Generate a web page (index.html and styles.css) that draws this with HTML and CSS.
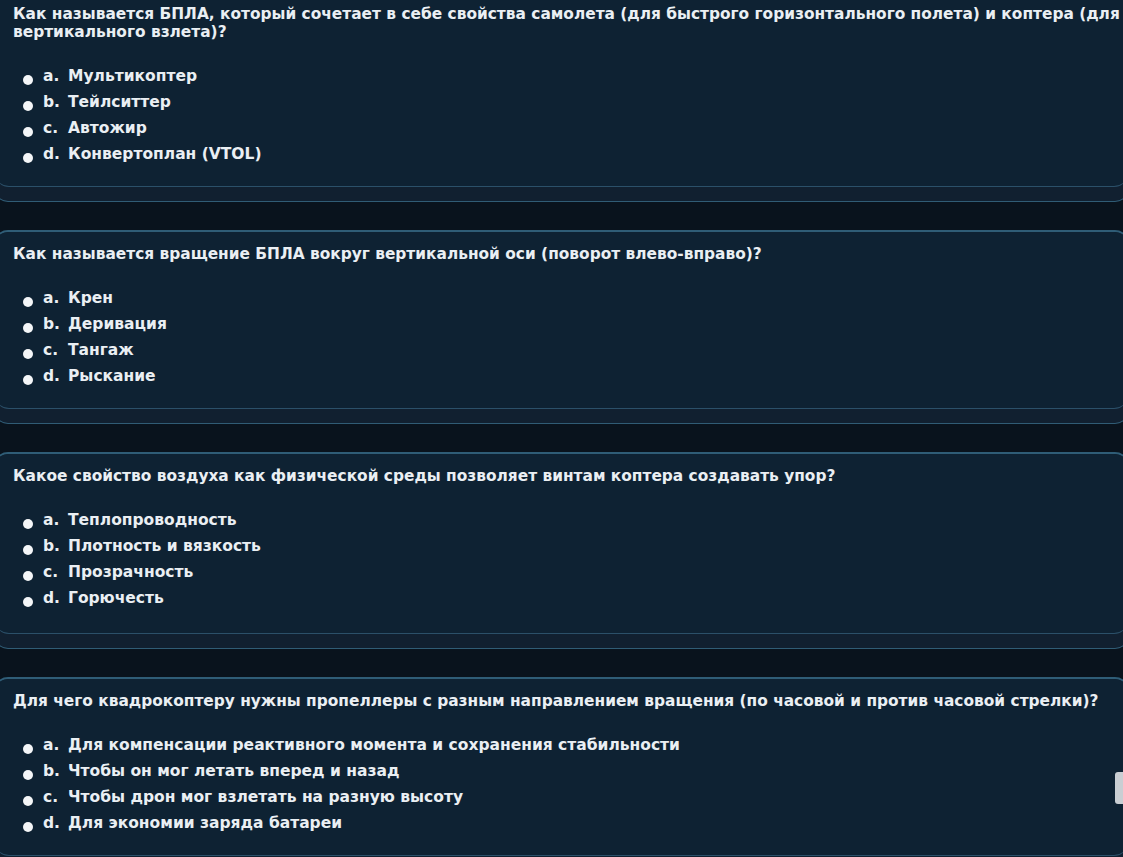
FILE: index.html
```html
<!DOCTYPE html>
<html lang="ru">
<head>
<meta charset="utf-8">
<title>Тест БПЛА</title>
<link rel="stylesheet" href="styles.css">
</head>
<body>
<div class="list">
  <section class="card">
    <div class="inner">
      <p class="qtext">Как называется БПЛА, который сочетает в себе свойства самолета (для быстрого горизонтального полета) и коптера (для вертикального взлета)?</p>
      <ul class="answers">
        <li><span class="dot"></span><span class="let">a.</span>Мультикоптер</li>
        <li><span class="dot"></span><span class="let">b.</span>Тейлситтер</li>
        <li><span class="dot"></span><span class="let">c.</span>Автожир</li>
        <li><span class="dot"></span><span class="let">d.</span>Конвертоплан (VTOL)</li>
      </ul>
    </div>
  </section>
  <section class="card">
    <div class="inner">
      <p class="qtext">Как называется вращение БПЛА вокруг вертикальной оси (поворот влево-вправо)?</p>
      <ul class="answers">
        <li><span class="dot"></span><span class="let">a.</span>Крен</li>
        <li><span class="dot"></span><span class="let">b.</span>Деривация</li>
        <li><span class="dot"></span><span class="let">c.</span>Тангаж</li>
        <li><span class="dot"></span><span class="let">d.</span>Рыскание</li>
      </ul>
    </div>
  </section>
  <section class="card">
    <div class="inner tall">
      <p class="qtext">Какое свойство воздуха как физической среды позволяет винтам коптера создавать упор?</p>
      <ul class="answers">
        <li><span class="dot"></span><span class="let">a.</span>Теплопроводность</li>
        <li><span class="dot"></span><span class="let">b.</span>Плотность и вязкость</li>
        <li><span class="dot"></span><span class="let">c.</span>Прозрачность</li>
        <li><span class="dot"></span><span class="let">d.</span>Горючесть</li>
      </ul>
    </div>
  </section>
  <section class="card">
    <div class="inner">
      <p class="qtext">Для чего квадрокоптеру нужны пропеллеры с разным направлением вращения (по часовой и против часовой стрелки)?</p>
      <ul class="answers">
        <li><span class="dot"></span><span class="let">a.</span>Для компенсации реактивного момента и сохранения стабильности</li>
        <li><span class="dot"></span><span class="let">b.</span>Чтобы он мог летать вперед и назад</li>
        <li><span class="dot"></span><span class="let">c.</span>Чтобы дрон мог взлетать на разную высоту</li>
        <li><span class="dot"></span><span class="let">d.</span>Для экономии заряда батареи</li>
      </ul>
    </div>
  </section>
</div>
<div class="thumb"></div>
</body>
</html>
```

FILE: styles.css
```css
html, body {
  margin: 0;
  padding: 0;
  background: #09131d;
  overflow: hidden;
  height: 100%;
}
body {
  font-family: "DejaVu Sans", sans-serif;
  font-weight: 700;
  color: #eaeff3;
  position: relative;
}
.list {
  margin-top: -10px;
  display: flex;
  flex-direction: column;
  gap: 28px;
}
.card {
  margin: 0 -6px;
  background: #112030;
  border: 1px solid #305c75;
  border-top: 2px solid #2f5d77;
  border-radius: 14px;
  padding-bottom: 14px;
}
.inner {
  background: #0e2233;
  border-bottom: 1px solid #2b5069;
  border-radius: 14px;
  padding: 13px 4px 19px 18px;
}
.inner.tall {
  padding-bottom: 22px;
}
.qtext {
  margin: 0;
  font-size: 15.4px;
  line-height: 18px;
}
.answers {
  list-style: none;
  margin: 22px 0 0 0;
  padding: 0;
}
.answers li {
  display: flex;
  align-items: center;
  height: 26px;
  font-size: 15.5px;
}
.dot {
  width: 10px;
  height: 10px;
  border-radius: 50%;
  background: #f4f6f8;
  margin: 7px 10px 0 10px;
  flex: none;
}
.let {
  width: 25px;
  flex: none;
}
.thumb {
  position: absolute;
  right: 0;
  top: 772px;
  width: 8px;
  height: 32px;
  border-radius: 3px 0 0 3px;
  background: #c9ced3;
}
```
